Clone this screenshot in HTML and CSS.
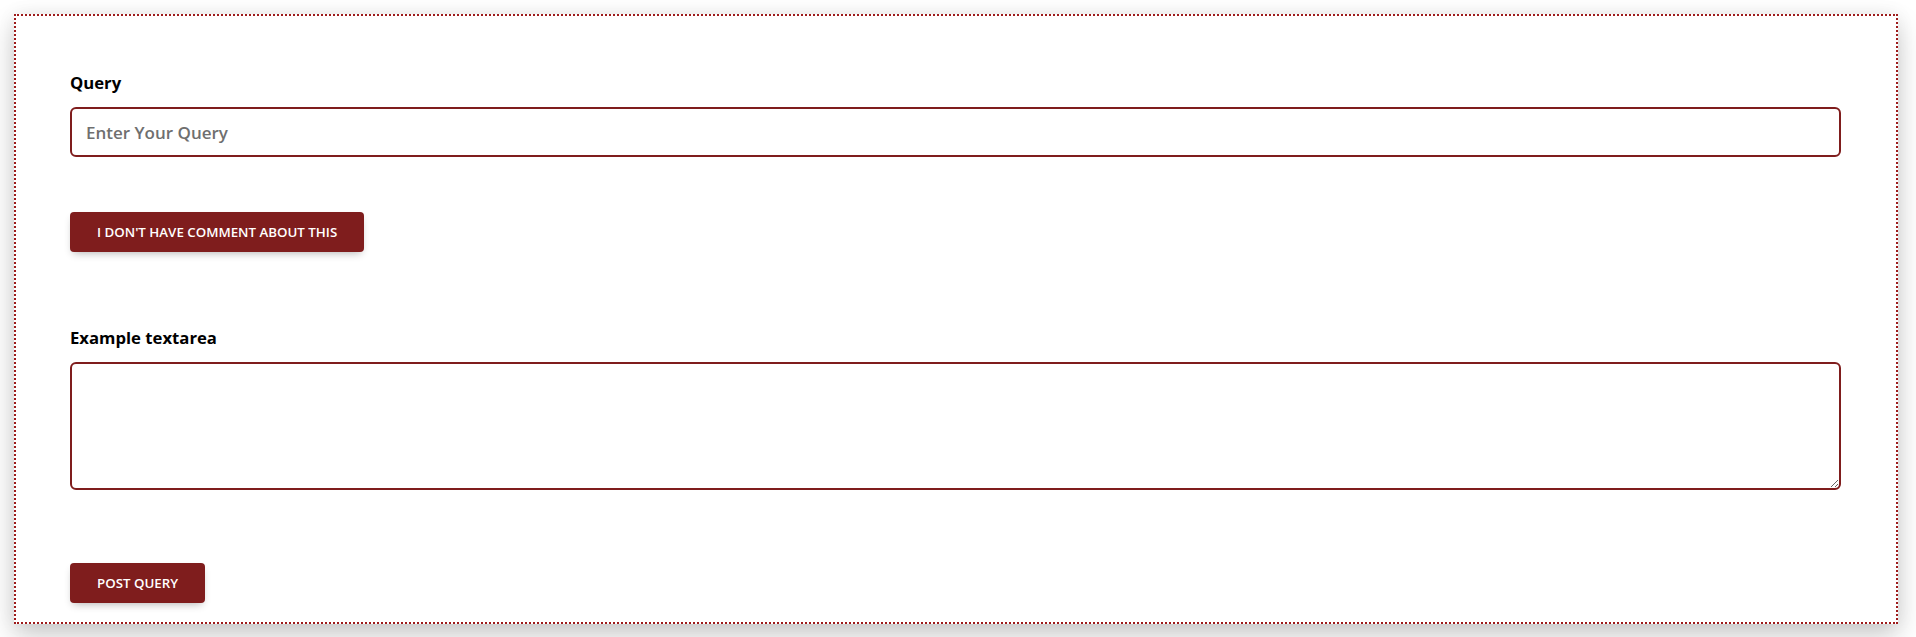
FILE: index.html
```html
<!DOCTYPE html>
<html lang="en">
<head>
<meta charset="utf-8">
<title>Query</title>
<link rel="stylesheet" href="styles.css">
</head>
<body>
<div class="card">
  <div class="field">
    <label class="label" for="q">Query</label>
    <input class="input" id="q" type="text" placeholder="Enter Your Query">
  </div>
  <button class="btn btn-first" type="button">I don't have comment about this</button>
  <div class="field field-area">
    <label class="label" for="t">Example textarea</label>
    <textarea class="textarea" id="t"></textarea>
  </div>
  <button class="btn btn-post" type="button">Post Query</button>
</div>
</body>
</html>
```
FILE: styles.css
```css
* { box-sizing: border-box; }
html, body { margin: 0; padding: 0; background: #ffffff; }
body {
  font-family: "Open Sans", "Noto Sans", sans-serif;
  color: #000;
  padding: 14px 18px 14px 14px;
}
.card {
  border: 2px dotted #9e1c1c;
  background: #fff;
  padding: 55px 55px 19px 54px;
  box-shadow: 0 12px 26px rgba(0, 0, 0, 0.2), 0 0 18px rgba(0, 0, 0, 0.06);
}
.field { display: flex; flex-direction: column; }
.label {
  font-size: 16.7px;
  font-weight: 700;
  line-height: 24px;
  margin-bottom: 12px;
}
.input {
  height: 50px;
  width: 100%;
  border: 2px solid #7f1d1d;
  border-radius: 6px;
  padding: 0 14px;
  font-family: inherit;
  font-size: 17px;
  font-weight: 600;
  outline: none;
}
.input::placeholder { color: #6f6f6f; }
.textarea {
  height: 128px;
  width: 100%;
  border: 2px solid #7f1d1d;
  border-radius: 6px;
  font-family: inherit;
  font-size: 16px;
  outline: none;
  display: block;
}
.btn {
  display: block;
  height: 40px;
  padding: 0 27px;
  border: 0;
  border-radius: 4px;
  background: #7f1d1d;
  color: #fff;
  font-family: inherit;
  font-size: 13.3px;
  font-weight: 600;
  text-transform: uppercase;
  box-shadow: 0 4px 9px -3px rgba(0, 0, 0, 0.3);
}
.btn-first { margin-top: 55px; }
.field-area { margin-top: 74px; }
.btn-post { margin-top: 73px; }
```
